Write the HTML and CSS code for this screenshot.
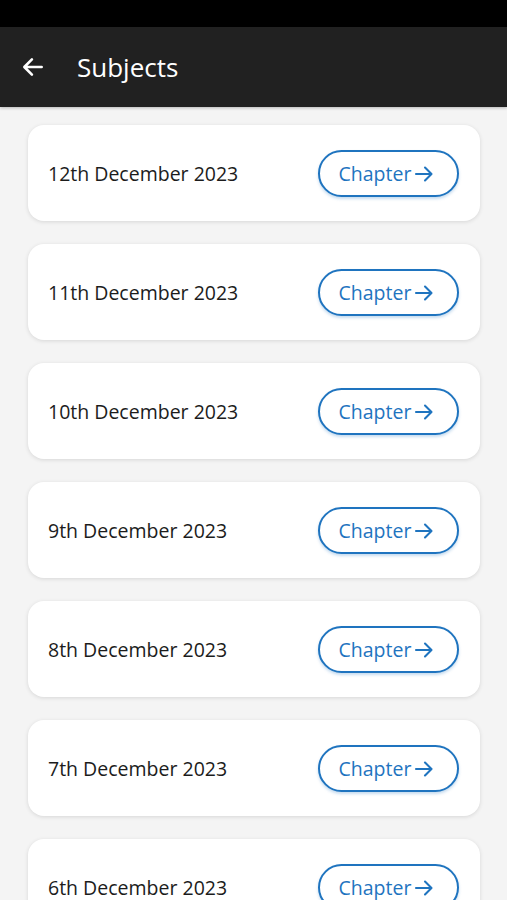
FILE: index.html
```html
<!DOCTYPE html>
<html lang="en">
<head>
    <meta charset="UTF-8">
    <meta name="viewport" content="width=device-width, initial-scale=1.0">
    <title>Subjects</title>
    <link rel="stylesheet" href="styles.css">
</head>
<body>
    <div class="status-bar"></div>
    <div class="app-bar">
        <svg class="back" width="26" height="26" viewBox="0 0 24 24">
            <path d="M20 12H5M11 5l-7 7 7 7" fill="none" stroke="#fff" stroke-width="2.4" stroke-linecap="round" stroke-linejoin="round"/>
        </svg>
        <h1>Subjects</h1>
    </div>

    <ul class="list">
        <li class="card"><span>12th December 2023</span><button class="chapter">Chapter<svg class="arr" width="20" height="20" viewBox="0 0 20 20"><path d="M2 10h15M11 3.5l6.5 6.5-6.5 6.5" fill="none" stroke="currentColor" stroke-width="2.1" stroke-linecap="round" stroke-linejoin="round"/></svg></button></li>
        <li class="card"><span>11th December 2023</span><button class="chapter">Chapter<svg class="arr" width="20" height="20" viewBox="0 0 20 20"><path d="M2 10h15M11 3.5l6.5 6.5-6.5 6.5" fill="none" stroke="currentColor" stroke-width="2.1" stroke-linecap="round" stroke-linejoin="round"/></svg></button></li>
        <li class="card"><span>10th December 2023</span><button class="chapter">Chapter<svg class="arr" width="20" height="20" viewBox="0 0 20 20"><path d="M2 10h15M11 3.5l6.5 6.5-6.5 6.5" fill="none" stroke="currentColor" stroke-width="2.1" stroke-linecap="round" stroke-linejoin="round"/></svg></button></li>
        <li class="card"><span>9th December 2023</span><button class="chapter">Chapter<svg class="arr" width="20" height="20" viewBox="0 0 20 20"><path d="M2 10h15M11 3.5l6.5 6.5-6.5 6.5" fill="none" stroke="currentColor" stroke-width="2.1" stroke-linecap="round" stroke-linejoin="round"/></svg></button></li>
        <li class="card"><span>8th December 2023</span><button class="chapter">Chapter<svg class="arr" width="20" height="20" viewBox="0 0 20 20"><path d="M2 10h15M11 3.5l6.5 6.5-6.5 6.5" fill="none" stroke="currentColor" stroke-width="2.1" stroke-linecap="round" stroke-linejoin="round"/></svg></button></li>
        <li class="card"><span>7th December 2023</span><button class="chapter">Chapter<svg class="arr" width="20" height="20" viewBox="0 0 20 20"><path d="M2 10h15M11 3.5l6.5 6.5-6.5 6.5" fill="none" stroke="currentColor" stroke-width="2.1" stroke-linecap="round" stroke-linejoin="round"/></svg></button></li>
        <li class="card"><span>6th December 2023</span><button class="chapter">Chapter<svg class="arr" width="20" height="20" viewBox="0 0 20 20"><path d="M2 10h15M11 3.5l6.5 6.5-6.5 6.5" fill="none" stroke="currentColor" stroke-width="2.1" stroke-linecap="round" stroke-linejoin="round"/></svg></button></li>
    </ul>
</body>
</html>
```

FILE: styles.css
```css
body {
    font-family: "Open Sans", "Noto Sans", sans-serif;
    margin: 0;
    background-color: #f4f4f4;
    overflow: hidden;
}

.status-bar {
    height: 27px;
    background-color: #000;
}

.app-bar {
    height: 80px;
    background-color: #212121;
    display: flex;
    align-items: center;
    padding-left: 20px;
    box-shadow: 0 1px 3px rgba(0, 0, 0, 0.25);
}

.app-bar .back {
    margin-right: 31px;
}

.app-bar h1 {
    margin: 0;
    color: #fff;
    font-size: 26px;
    font-weight: 400;
}

.list {
    list-style-type: none;
    margin: 0;
    padding: 18px 27px 0 28px;
    display: flex;
    flex-direction: column;
    gap: 23px;
}

.card {
    height: 96px;
    background-color: #fff;
    border-radius: 16px;
    box-shadow: 0 1px 4px rgba(0, 0, 0, 0.12);
    display: flex;
    align-items: center;
    justify-content: space-between;
    padding: 0 21px 0 20px;
    font-size: 19.5px;
    font-weight: 500;
    color: #1c1c1c;
}

.chapter {
    width: 141px;
    height: 47px;
    border: 2px solid #1f74bf;
    border-radius: 24px;
    background-color: #fff;
    color: #1f74bf;
    font-family: "Open Sans", "Noto Sans", sans-serif;
    font-size: 19.5px;
    font-weight: 500;
    padding: 0 4px 0 0;
    box-shadow: 0 2px 3px rgba(31, 116, 191, 0.25);
    cursor: pointer;
    display: flex;
    align-items: center;
    justify-content: center;
    gap: 3px;
}

.chapter .arr {
    margin-top: 1px;
}
```
